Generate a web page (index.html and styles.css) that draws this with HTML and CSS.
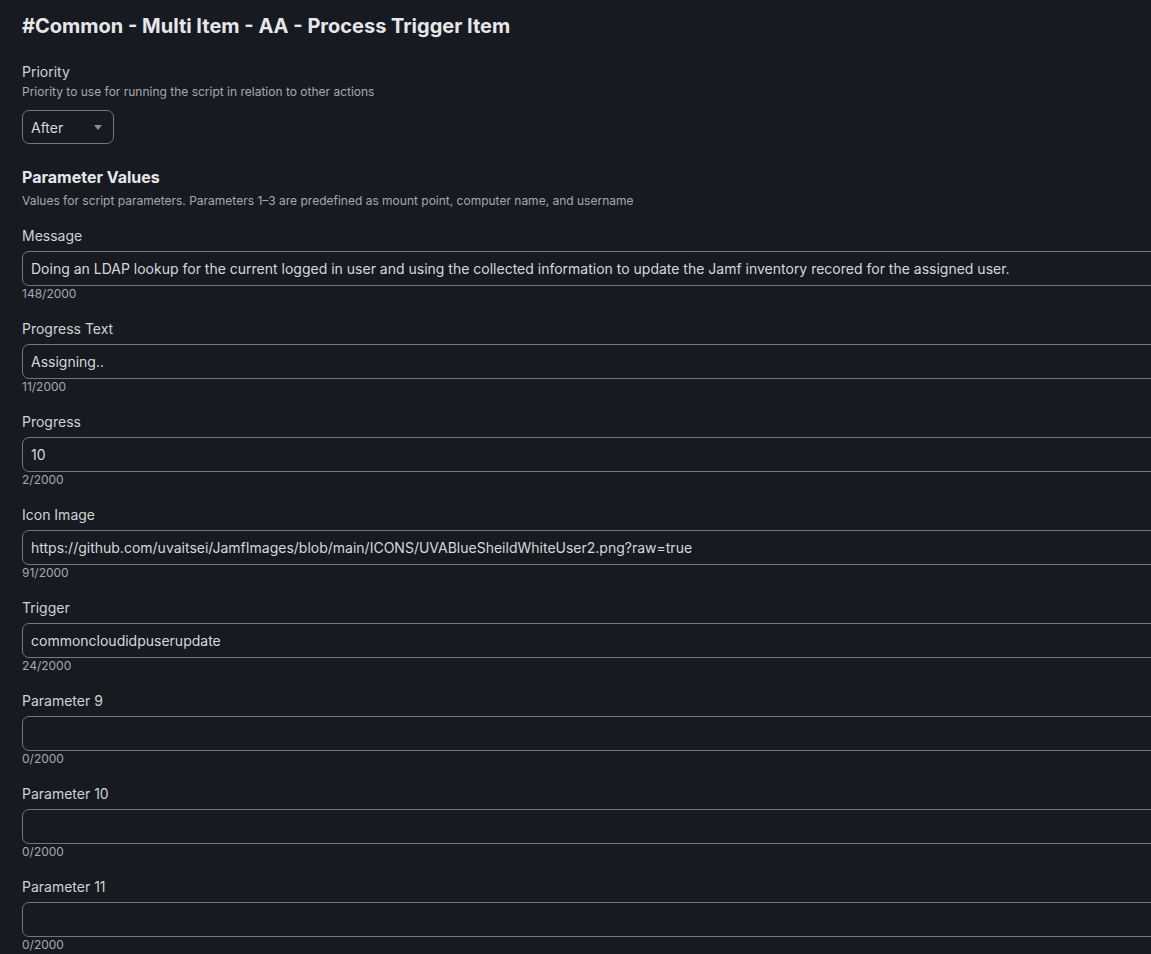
FILE: index.html
```html
<!DOCTYPE html>
<html>
<head>
<meta charset="utf-8">
<link rel="stylesheet" href="styles.css">
</head>
<body>
<div class="page">
  <h1 class="title">#Common - Multi Item - AA - Process Trigger Item</h1>

  <div class="priority">
    <div class="label">Priority</div>
    <div class="desc">Priority to use for running the script in relation to other actions</div>
    <div class="select"><span>After</span><span class="caret"></span></div>
  </div>

  <h2 class="section">Parameter Values</h2>
  <div class="desc">Values for script parameters. Parameters 1–3 are predefined as mount point, computer name, and username</div>

  <div class="fields">
    <div class="field">
      <div class="label">Message</div>
      <div class="input">Doing an LDAP lookup for the current logged in user and using the collected information to update the Jamf inventory recored for the assigned user.</div>
      <div class="count">148/2000</div>
    </div>
    <div class="field">
      <div class="label">Progress Text</div>
      <div class="input">Assigning..</div>
      <div class="count">11/2000</div>
    </div>
    <div class="field">
      <div class="label">Progress</div>
      <div class="input">10</div>
      <div class="count">2/2000</div>
    </div>
    <div class="field">
      <div class="label">Icon Image</div>
      <div class="input">https://github.com/uvaitsei/JamfImages/blob/main/ICONS/UVABlueSheildWhiteUser2.png?raw=true</div>
      <div class="count">91/2000</div>
    </div>
    <div class="field">
      <div class="label">Trigger</div>
      <div class="input">commoncloudidpuserupdate</div>
      <div class="count">24/2000</div>
    </div>
    <div class="field">
      <div class="label">Parameter 9</div>
      <div class="input"></div>
      <div class="count">0/2000</div>
    </div>
    <div class="field">
      <div class="label">Parameter 10</div>
      <div class="input"></div>
      <div class="count">0/2000</div>
    </div>
    <div class="field">
      <div class="label">Parameter 11</div>
      <div class="input"></div>
      <div class="count">0/2000</div>
    </div>
  </div>
</div>
</body>
</html>
```

FILE: styles.css
```css
html, body {
  margin: 0;
  padding: 0;
  background: #171a21;
  overflow: hidden;
}
body {
  font-family: Inter, "Noto Sans", sans-serif;
  color: #d6d8dc;
}
.page {
  padding: 12px 0 0 22px;
  width: 1200px;
}
.title {
  margin: 0;
  font-size: 20px;
  line-height: 28px;
  font-weight: 700;
  color: #e6e7ea;
}
.priority {
  margin-top: 22px;
}
.label {
  font-size: 14px;
  line-height: 20px;
  color: #d0d2d6;
}
.desc {
  font-size: 12px;
  line-height: 16px;
  color: #a6a9af;
  margin-top: 2px;
}
.select {
  margin-top: 10px;
  width: 92px;
  height: 34px;
  box-sizing: border-box;
  border: 1px solid #73767c;
  border-radius: 7px;
  display: flex;
  align-items: center;
  padding-left: 8px;
  font-size: 14px;
  color: #d6d8dc;
}
.caret {
  margin-left: 31px;
  width: 0;
  height: 0;
  border-left: 4px solid transparent;
  border-right: 4px solid transparent;
  border-top: 5px solid #8a8d93;
}
.section {
  margin: 22px 0 0 0;
  font-size: 16px;
  line-height: 22px;
  font-weight: 700;
  color: #e6e7ea;
}
.section + .desc {
  margin-top: 5px;
}
.fields {
  margin-top: 17px;
  display: flex;
  flex-direction: column;
  gap: 17px;
}
.field {
  display: flex;
  flex-direction: column;
}
.input {
  margin-top: 5px;
  height: 35px;
  box-sizing: border-box;
  border: 1px solid #73767c;
  border-radius: 7px;
  padding: 0 8px;
  display: flex;
  align-items: center;
  font-size: 14px;
  color: #d6d8dc;
  white-space: nowrap;
  overflow: hidden;
}
.count {
  font-size: 12px;
  line-height: 16px;
  color: #a6a9af;
}
```
